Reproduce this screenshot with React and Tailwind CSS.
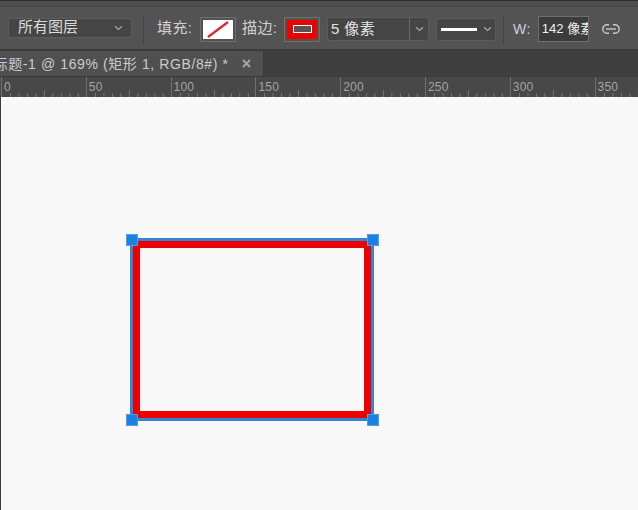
import React from 'react';

const cjk = 'font-["Liberation_Sans","Noto_Sans_CJK_SC",sans-serif]';

const Chevron = ({ className = '' }) => (
  <svg width="9" height="6" viewBox="0 0 9 6" className={className} fill="none" stroke="#a8a8a8" strokeWidth="1.2">
    <path d="M1 1.2 L4.5 4.4 L8 1.2" />
  </svg>
);

const RulerSegment = ({ label }) => (
  <div className="relative w-[84.8px] h-full shrink-0 border-l border-[#6e6e6e]">
    <span className="absolute left-[2px] top-[3px] text-[12px] leading-[14px] tracking-[0.2px] text-[#a3a3a3]">{label}</span>
    <svg width="85" height="20" className="absolute left-0 top-0">
      {[1, 2, 3, 4, 5, 6, 7, 8, 9].map((i) => (
        <line key={i} x1={i * 8.48} x2={i * 8.48} y1={i === 5 ? 13 : 16} y2="20" stroke="#767676" strokeWidth="1" />
      ))}
    </svg>
  </div>
);

const Handle = ({ className }) => (
  <div className={`absolute w-[12px] h-[12px] bg-[#1a82e6] border border-[#5b9ad6] ${className}`}></div>
);

export default function App() {
  return (
    <div className={`w-[638px] h-[510px] overflow-hidden flex flex-col bg-[#f8f8f8] ${cjk}`}>
      {/* options bar */}
      <div className="h-[51px] shrink-0 bg-[#535353] border-t-[1px] border-[#2c2c2c] border-b-[2px] border-b-[#3a3a3a] flex flex-col text-[15px] text-[#d0d0d0]">
        <div className="h-[6px] shrink-0 bg-[#4f4f4f] border-b border-[#484848]"></div>
        <div className="h-[42px] shrink-0 flex items-center pl-[8px] pt-[2px]">
          <div className="w-[124px] h-[20px] mb-[3px] rounded-[3px] bg-[#454545] border border-[#5c5c5c] flex items-center justify-between pl-[9px] pr-[8px]">
            <span className="text-[15px] text-[#dcdcdc]">所有图层</span>
            <Chevron />
          </div>
          <div className="w-px h-[29px] bg-[#434343] ml-[11px]"></div>
          <span className="ml-[13px] w-[38px] mb-[1px] whitespace-nowrap tracking-[0.4px]">填充:</span>
          <div className="ml-[5px] w-[36px] h-[25px] border border-[#6e6e6e] p-[2px]">
            <div className="w-full h-full bg-white flex items-center justify-center">
              <svg width="30" height="19" viewBox="0 0 30 19">
                <line x1="5" y1="17" x2="25" y2="2" stroke="#d92631" strokeWidth="2.2" />
              </svg>
            </div>
          </div>
          <span className="ml-[6px] w-[38px] mb-[1px] whitespace-nowrap tracking-[0.4px]">描边:</span>
          <div className="ml-[4px] w-[36px] h-[25px] border border-[#6e6e6e] p-[2px]">
            <div className="w-full h-full bg-[#ee0000] flex items-center justify-center">
              <div className="w-[19px] h-[8px] border border-white bg-[#555555]"></div>
            </div>
          </div>
          <div className="ml-[7px] w-[102px] h-[24px] rounded-[3px] bg-[#454545] border border-[#5c5c5c] flex items-center">
            <span className="flex-1 pl-[3px] text-[15px] tracking-[0.4px] text-[#e4e4e4] whitespace-nowrap">5 像素</span>
            <div className="w-[19px] h-full border-l border-[#6a6a6a] flex items-center justify-center">
              <Chevron />
            </div>
          </div>
          <div className="ml-[7px] w-[60px] h-[23px] rounded-[3px] bg-[#454545] border border-[#5c5c5c] flex items-center pl-[4px]">
            <div className="w-[36px] h-[3px] bg-white"></div>
            <Chevron className="ml-[6px]" />
          </div>
          <div className="w-px h-[29px] bg-[#434343] ml-[7px]"></div>
          <span className="ml-[9px] text-[14px] tracking-[0.5px] text-[#c8d0d8]">W:</span>
          <div className="ml-[7px] w-[51px] h-[26px] border border-[#6e6e6e] bg-[#3c3c3c] overflow-hidden flex items-center pl-[3px]">
            <span className="text-[13px] text-[#f0f0f0] whitespace-nowrap">142 像素</span>
          </div>
          <svg width="18" height="10" viewBox="0 0 18 10" className="ml-[13px]" fill="none" stroke="#c8c8c8" strokeWidth="1.4">
            <path d="M7 0.8 H5 a4.2 4.2 0 0 0 0 8.4 H7" />
            <path d="M11 0.8 h2 a4.2 4.2 0 0 1 0 8.4 H11" />
            <path d="M4 5 H14" />
          </svg>
        </div>
      </div>

      {/* tab bar */}
      <div className="h-[25px] shrink-0 bg-[#3f3f3f] flex">
        <div className="w-[264px] h-full bg-[#505050] border-r border-[#3a3a3a] flex items-center whitespace-nowrap overflow-hidden">
          <span className="ml-[-21px] w-[263px] shrink-0 text-[14px] leading-[24px] text-[#c8ccd0] tracking-[0.6px]">未标题-1 @ 169% (矩形 1, RGB/8#) *</span>
          <svg width="9" height="9" viewBox="0 0 9 9" className="shrink-0" stroke="#a5a5a5" strokeWidth="2">
            <path d="M1 1 L8 8 M8 1 L1 8" />
          </svg>
        </div>
      </div>

      {/* ruler */}
      <div className="h-[21px] shrink-0 bg-[#484848] border-t border-[#3a3a3a] flex pl-[1px] overflow-hidden">
        {['0', '50', '100', '150', '200', '250', '300', '350'].map((label) => (
          <RulerSegment key={label} label={label} />
        ))}
      </div>

      {/* canvas */}
      <div className="relative flex-1 bg-[#f8f8f8] border-l border-[#3c3c3c]">
        <div className="absolute left-[129px] top-[141px] w-[244px] h-[183px] border-[3px] border-[#2f86d8]">
          <div className="w-full h-full border-[7px] border-[#ee0000]"></div>
        </div>
        <Handle className="left-[125px] top-[137px]" />
        <Handle className="left-[366px] top-[137px]" />
        <Handle className="left-[125px] top-[317px]" />
        <Handle className="left-[366px] top-[317px]" />
      </div>
    </div>
  );
}
